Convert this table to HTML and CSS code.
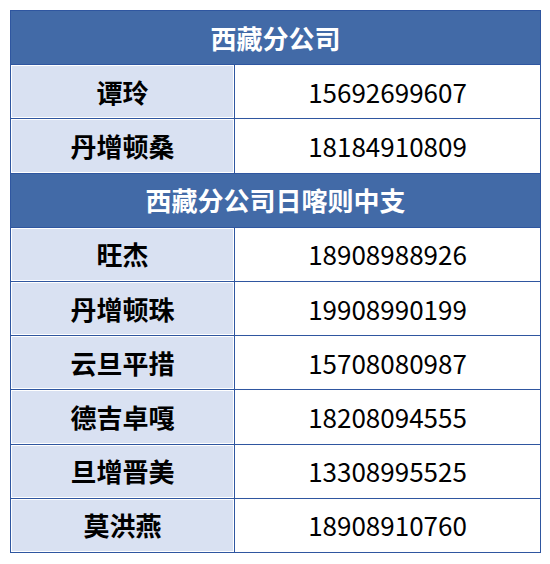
FILE: index.html
```html
<!DOCTYPE html>
<html lang="zh">
<head>
<meta charset="utf-8">
<link rel="stylesheet" href="styles.css">
</head>
<body>
<table class="contacts">
  <colgroup><col class="col-name"><col class="col-phone"></colgroup>
  <tr class="group"><th colspan="2">西藏分公司</th></tr>
  <tr><td class="name">谭玲</td><td class="phone">15692699607</td></tr>
  <tr><td class="name">丹增顿桑</td><td class="phone">18184910809</td></tr>
  <tr class="group"><th colspan="2">西藏分公司日喀则中支</th></tr>
  <tr><td class="name">旺杰</td><td class="phone">18908988926</td></tr>
  <tr><td class="name">丹增顿珠</td><td class="phone">19908990199</td></tr>
  <tr><td class="name">云旦平措</td><td class="phone">15708080987</td></tr>
  <tr><td class="name">德吉卓嘎</td><td class="phone">18208094555</td></tr>
  <tr><td class="name">旦增晋美</td><td class="phone">13308995525</td></tr>
  <tr><td class="name">莫洪燕</td><td class="phone">18908910760</td></tr>
</table>
</body>
</html>
```
FILE: styles.css
```css
html, body {
  margin: 0;
  background: #ffffff;
}
body {
  padding: 10px;
  font-family: "Noto Sans CJK SC", "Noto Sans", sans-serif;
}
.contacts {
  border-collapse: collapse;
  width: 530px;
  height: 543px;
  table-layout: fixed;
}
.col-name {
  width: 224px;
}
.col-phone {
  width: 306px;
}
.contacts th,
.contacts td {
  border: 1.5px solid #2f56a0;
  padding: 0;
  text-align: center;
  vertical-align: middle;
  font-size: 26px;
  line-height: 1;
}
.contacts tr {
  height: 54.2px;
}
.group th {
  background: #426aa7;
  color: #ffffff;
  font-weight: 700;
}
.name {
  background: #d9e1f2;
  color: #000000;
  font-weight: 700;
  box-shadow: inset 1px 1px 0 #ffffff, inset -1px -1px 0 #ffffff;
}
.phone {
  background: #ffffff;
  color: #000000;
  font-weight: 400;
  font-size: 26.5px;
}
```
